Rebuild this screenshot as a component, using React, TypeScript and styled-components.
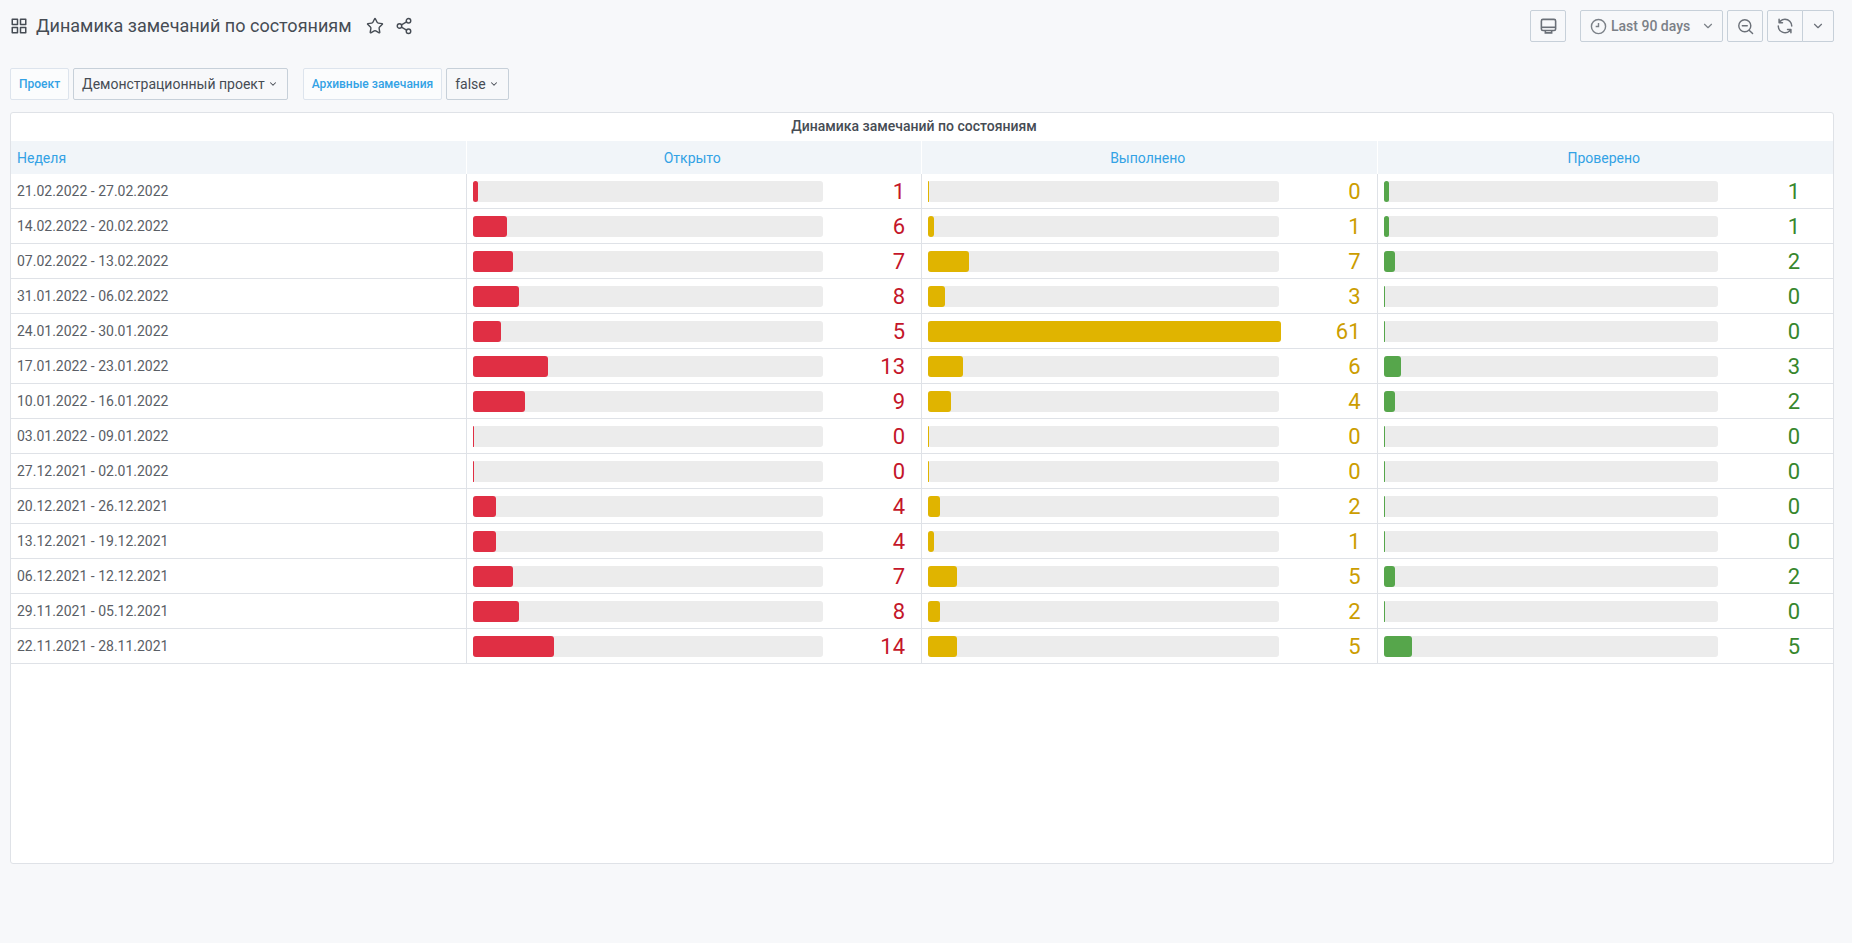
import styled, { createGlobalStyle } from "styled-components";
import { ChevronDown, Share2, Star } from "lucide-react";

const UNIT = 5.79;

type Tone = "red" | "yellow" | "green";

const TONES: Record<Tone, { bar: string; text: string }> = {
  red: { bar: "#e02f44", text: "#c4162a" },
  yellow: { bar: "#e0b400", text: "#cc9d00" },
  green: { bar: "#56a64b", text: "#37872d" },
};

const rows: [string, number, number, number][] = [
  ["21.02.2022 - 27.02.2022", 1, 0, 1],
  ["14.02.2022 - 20.02.2022", 6, 1, 1],
  ["07.02.2022 - 13.02.2022", 7, 7, 2],
  ["31.01.2022 - 06.02.2022", 8, 3, 0],
  ["24.01.2022 - 30.01.2022", 5, 61, 0],
  ["17.01.2022 - 23.01.2022", 13, 6, 3],
  ["10.01.2022 - 16.01.2022", 9, 4, 2],
  ["03.01.2022 - 09.01.2022", 0, 0, 0],
  ["27.12.2021 - 02.01.2022", 0, 0, 0],
  ["20.12.2021 - 26.12.2021", 4, 2, 0],
  ["13.12.2021 - 19.12.2021", 4, 1, 0],
  ["06.12.2021 - 12.12.2021", 7, 5, 2],
  ["29.11.2021 - 05.12.2021", 8, 2, 0],
  ["22.11.2021 - 28.11.2021", 14, 5, 5],
];

const GlobalStyle = createGlobalStyle`
  html, body {
    margin: 0;
    padding: 0;
    height: 100%;
    overflow: hidden;
    background: #f7f8fa;
    font-family: Roboto, "Noto Sans", sans-serif;
    color: #464c54;
  }
  * {
    box-sizing: border-box;
  }
`;

const Page = styled.div`
  height: 943px;
  padding: 10px 18px 0 10px;
  display: flex;
  flex-direction: column;
`;

const TopBar = styled.header`
  height: 32px;
  display: flex;
  align-items: center;
  justify-content: space-between;
`;

const TitleGroup = styled.div`
  display: flex;
  align-items: center;
  color: #464c54;
`;

const Title = styled.h1`
  margin: 0 14px 0 8px;
  font-size: 18px;
  line-height: 32px;
  font-weight: 400;
  white-space: nowrap;
`;

const TitleAction = styled.span`
  display: flex;
  margin-right: 11px;
`;

const Tools = styled.div`
  display: flex;
  align-items: center;
`;

const ToolButton = styled.div<{ $gapLeft?: number; $joined?: boolean; $wide?: number }>`
  height: 32px;
  width: ${(p) => p.$wide ?? 36}px;
  margin-left: ${(p) => p.$gapLeft ?? 4}px;
  display: flex;
  align-items: center;
  justify-content: center;
  background: #f7f8fa;
  border: 1px solid #c7d0d9;
  border-radius: ${(p) => (p.$joined ? "2px 0 0 2px" : "2px")};
  color: #6b7078;
`;

const RefreshTail = styled(ToolButton)`
  margin-left: -1px;
  border-radius: 0 2px 2px 0;
`;

const TimeButton = styled(ToolButton)`
  justify-content: flex-start;
  padding: 0 7px 0 9px;
  font-size: 14px;
  font-weight: 500;
  color: #7b8087;
  gap: 4px;
`;

const TimeLabel = styled.span`
  flex: 1;
  white-space: nowrap;
`;

const Variables = styled.div`
  margin-top: 26px;
  height: 32px;
  display: flex;
  align-items: stretch;
`;

const VarLabel = styled.div<{ $gapLeft?: number }>`
  margin-left: ${(p) => p.$gapLeft ?? 0}px;
  padding: 0 8px;
  display: flex;
  align-items: center;
  font-size: 12px;
  font-weight: 500;
  color: #33a2e5;
  background: #fbfcfd;
  border: 1px solid #dde4ed;
  border-radius: 2px;
  white-space: nowrap;
`;

const VarValue = styled.div`
  margin-left: 4px;
  padding: 0 9px 0 8px;
  display: flex;
  align-items: center;
  gap: 3px;
  font-size: 14px;
  color: #464c54;
  background: #f7f8fa;
  border: 1px solid #c7d0d9;
  border-radius: 2px;
  white-space: nowrap;
`;

const Panel = styled.section`
  margin-top: 12px;
  height: 752px;
  background: #fff;
  border: 1px solid #dfe2e7;
  border-radius: 3px;
  overflow: hidden;
`;

const PanelTitle = styled.div`
  height: 28px;
  padding: 0 16px 2px 0;
  display: flex;
  align-items: center;
  justify-content: center;
  font-size: 14px;
  font-weight: 500;
  color: #464c54;
`;

const Grid = styled.div`
  display: grid;
  grid-template-columns: repeat(4, 1fr);
`;

const HeadCell = styled.div<{ $center?: boolean }>`
  height: 33px;
  padding: ${(p) => (p.$center ? "0 10px 0 7px" : "0 6px")};
  display: flex;
  align-items: center;
  justify-content: ${(p) => (p.$center ? "center" : "flex-start")};
  background: #f1f5f9;
  border-right: 1px solid #fff;
  font-size: 14px;
  color: #33a2e5;

  &:nth-child(4) {
    border-right: 0;
  }
`;

const DateCell = styled.div`
  height: 35px;
  padding: 0 6px 1px;
  display: flex;
  align-items: center;
  border-bottom: 1px solid #dfe2e7;
  border-right: 1px solid #dfe2e7;
  font-size: 14px;
  color: #5a5e66;
`;

const GaugeCell = styled.div<{ $end: number; $last?: boolean }>`
  height: 35px;
  padding: 0 ${(p) => p.$end}px 0 6px;
  display: flex;
  align-items: flex-start;
  border-bottom: 1px solid #dfe2e7;
  border-right: ${(p) => (p.$last ? "0" : "1px solid #dfe2e7")};
`;

const Track = styled.div<{ $width: number }>`
  margin-top: 7px;
  width: ${(p) => p.$width}px;
  height: 21px;
  flex: none;
  background: #ececec;
  border-radius: 3px;
`;

const Fill = styled.div<{ $tone: Tone }>`
  height: 100%;
  background: ${(p) => TONES[p.$tone].bar};
  border-radius: 3px;
`;

const Value = styled.div<{ $tone: Tone }>`
  flex: 1;
  height: 34px;
  line-height: 35px;
  text-align: right;
  font-size: 22px;
  color: ${(p) => TONES[p.$tone].text};
`;

const AppsIcon = () => (
  <svg width="18" height="18" viewBox="0 0 24 24" fill="currentColor">
    <path d="M10 13H3a1 1 0 0 0-1 1v7a1 1 0 0 0 1 1h7a1 1 0 0 0 1-1v-7a1 1 0 0 0-1-1Zm-1 7H4v-5h5ZM21 2h-7a1 1 0 0 0-1 1v7a1 1 0 0 0 1 1h7a1 1 0 0 0 1-1V3a1 1 0 0 0-1-1Zm-1 7h-5V4h5Zm1 4h-7a1 1 0 0 0-1 1v7a1 1 0 0 0 1 1h7a1 1 0 0 0 1-1v-7a1 1 0 0 0-1-1Zm-1 7h-5v-5h5ZM10 2H3a1 1 0 0 0-1 1v7a1 1 0 0 0 1 1h7a1 1 0 0 0 1-1V3a1 1 0 0 0-1-1ZM9 9H4V4h5Z" />
  </svg>
);

const MonitorIcon = () => (
  <svg width="19" height="19" viewBox="0 0 24 24" fill="none" stroke="currentColor" strokeWidth="2">
    <path d="M5 3h14a2 2 0 0 1 2 2v10a2 2 0 0 1-2 2H5a2 2 0 0 1-2-2V5a2 2 0 0 1 2-2Z" />
    <path d="M3 13h18" />
    <path d="M8 17v3h8v-3" />
  </svg>
);

const ClockIcon = () => (
  <svg width="17" height="17" viewBox="0 0 24 24" fill="none" stroke="currentColor" strokeWidth="2">
    <circle cx="12" cy="12" r="10" />
    <path d="M12 7v5H8" />
  </svg>
);

const ZoomOutIcon = () => (
  <svg width="17" height="17" viewBox="0 0 24 24" fill="none" stroke="currentColor" strokeWidth="2" strokeLinecap="round">
    <circle cx="11" cy="11" r="8.5" />
    <path d="M7.5 11h7M17.5 17.5 22 22" />
  </svg>
);

const SyncIcon = () => (
  <svg width="18" height="18" viewBox="0 0 24 24" fill="currentColor">
    <path d="M19.91 15.51h-4.53a1 1 0 0 0 0 2h2.4A8 8 0 0 1 4 12a1 1 0 0 0-2 0 10 10 0 0 0 16.88 7.23V21a1 1 0 0 0 2 0v-4.5a1 1 0 0 0-.97-.99ZM12 2a10 10 0 0 0-6.88 2.77V3a1 1 0 0 0-2 0v4.5a1 1 0 0 0 1 1h4.5a1 1 0 0 0 0-2H6.22A8 8 0 0 1 20 12a1 1 0 0 0 2 0A10 10 0 0 0 12 2Z" />
  </svg>
);

const Gauge = ({ value, tone, track, end, last }: { value: number; tone: Tone; track: number; end: number; last?: boolean }) => (
  <GaugeCell $end={end} $last={last}>
    <Track $width={track}>
      <Fill $tone={tone} style={{ width: Math.max(1, value * UNIT) }} />
    </Track>
    <Value $tone={tone}>{value}</Value>
  </GaugeCell>
);

export default function App() {
  return (
    <Page>
      <GlobalStyle />
      <TopBar>
        <TitleGroup>
          <AppsIcon />
          <Title>Динамика замечаний по состояниям</Title>
          <TitleAction>
            <Star size={18} strokeWidth={1.9} />
          </TitleAction>
          <TitleAction>
            <Share2 size={18} strokeWidth={1.9} />
          </TitleAction>
        </TitleGroup>
        <Tools>
          <ToolButton>
            <MonitorIcon />
          </ToolButton>
          <TimeButton $gapLeft={14} $wide={143}>
            <ClockIcon />
            <TimeLabel>Last 90 days</TimeLabel>
            <ChevronDown size={14} />
          </TimeButton>
          <ToolButton>
            <ZoomOutIcon />
          </ToolButton>
          <ToolButton $joined>
            <SyncIcon />
          </ToolButton>
          <RefreshTail $wide={32}>
            <ChevronDown size={14} />
          </RefreshTail>
        </Tools>
      </TopBar>

      <Variables>
        <VarLabel>Проект</VarLabel>
        <VarValue>
          Демонстрационный проект
          <ChevronDown size={10} strokeWidth={2.5} />
        </VarValue>
        <VarLabel $gapLeft={15}>Архивные замечания</VarLabel>
        <VarValue>
          false
          <ChevronDown size={10} strokeWidth={2.5} />
        </VarValue>
      </Variables>

      <Panel>
        <PanelTitle>Динамика замечаний по состояниям</PanelTitle>
        <Grid>
          <HeadCell>Неделя</HeadCell>
          <HeadCell $center>Открыто</HeadCell>
          <HeadCell $center>Выполнено</HeadCell>
          <HeadCell $center>Проверено</HeadCell>
          {rows.flatMap(([week, open, done, checked]) => [
            <DateCell key={week}>{week}</DateCell>,
            <Gauge key={week + "o"} value={open} tone="red" track={350} end={16} />,
            <Gauge key={week + "d"} value={done} tone="yellow" track={351} end={16} />,
            <Gauge key={week + "c"} value={checked} tone="green" track={334} end={33} last />,
          ])}
        </Grid>
      </Panel>
    </Page>
  );
}
